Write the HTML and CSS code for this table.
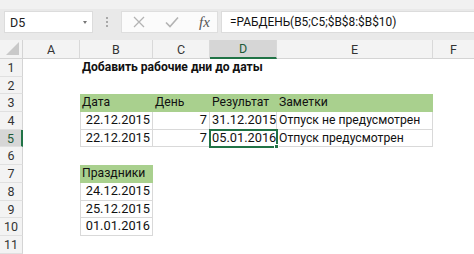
FILE: index.html
```html
<!DOCTYPE html>
<html lang="ru">
<head>
<meta charset="utf-8">
<link rel="stylesheet" href="styles.css">
</head>
<body>
<div class="app">
  <div class="fbar">
    <div class="namebox"><span>D5</span><span class="caret"></span></div>
    <div class="grip"><i></i><i></i><i></i></div>
    <div class="btns">
      <svg class="ic" width="14" height="14" viewBox="0 0 14 14"><path d="M2 2 L12 12 M12 2 L2 12" stroke="#b3b3b3" stroke-width="1.3" fill="none"/></svg>
      <svg class="ic" width="16" height="14" viewBox="0 0 16 14"><path d="M2 7.5 L6 11.5 L14 2.5" stroke="#b3b3b3" stroke-width="1.6" fill="none"/></svg>
      <span class="fx">fx</span>
    </div>
    <div class="formula">=РАБДЕНЬ(B5;C5;$B$8:$B$10)</div>
  </div>
  <div class="sheet">
    <div class="corner"><span></span></div>
    <div class="ch">A</div><div class="ch">B</div><div class="ch">C</div><div class="ch sel">D</div><div class="ch">E</div><div class="ch last">F</div>

    <div class="rh">1</div><div></div><div class="title">Добавить рабочие дни до даты</div><div></div><div></div><div></div><div></div>
    <div class="rh">2</div><div></div><div></div><div></div><div></div><div></div><div></div>
    <div class="rh">3</div><div></div><div class="th">Дата</div><div class="th">День</div><div class="th">Результат</div><div class="th">Заметки</div><div></div>
    <div class="rh">4</div><div></div><div class="td r">22.12.2015</div><div class="td r">7</div><div class="td r">31.12.2015</div><div class="td">Отпуск не предусмотрен</div><div></div>
    <div class="rh sel">5</div><div></div><div class="td r">22.12.2015</div><div class="td r">7</div><div class="td r active">05.01.2016<span class="handle"></span></div><div class="td">Отпуск предусмотрен</div><div></div>
    <div class="rh">6</div><div></div><div></div><div></div><div></div><div></div><div></div>
    <div class="rh">7</div><div></div><div class="th">Праздники</div><div></div><div></div><div></div><div></div>
    <div class="rh">8</div><div></div><div class="td r">24.12.2015</div><div></div><div></div><div></div><div></div>
    <div class="rh">9</div><div></div><div class="td r">25.12.2015</div><div></div><div></div><div></div><div></div>
    <div class="rh">10</div><div></div><div class="td r">01.01.2016</div><div></div><div></div><div></div><div></div>
    <div class="rh">11</div><div></div><div></div><div></div><div></div><div></div><div></div>
  </div>
</div>
</body>
</html>
```
FILE: styles.css
```css
* { box-sizing: border-box; }
html, body { margin: 0; padding: 0; background: #fff; }
body { width: 474px; height: 254px; overflow: hidden; font-family: Roboto, "Noto Sans", sans-serif; color: #111; }

.app { display: flex; flex-direction: column; }

/* formula bar */
.fbar {
  height: 40px;
  background: #e9e9e9;
  border-top: 9px solid #f1f1f1;
  display: flex;
  align-items: flex-start;
  padding: 2px 0 0 4px;
}
.namebox {
  width: 89px; height: 22px;
  background: #fff;
  border: 1px solid #dcdcdc;
  display: flex; align-items: center; justify-content: space-between;
  padding: 0 5px 0 5px;
  font-size: 12.5px; color: #222;
}
.caret { width: 0; height: 0; border-left: 2.5px solid transparent; border-right: 2.5px solid transparent; border-top: 3px solid #777; }
.grip { width: 28px; height: 22px; display: flex; flex-direction: column; align-items: center; justify-content: center; gap: 2px; }
.grip i { display: block; width: 2px; height: 2px; background: #a8a8a8; }
.btns {
  width: 97px; height: 22px;
  background: #fbfbfb;
  border: 1px solid #dedede;
  display: flex; align-items: center;
  padding: 0 0 0 10px;
  gap: 18px;
}
.fx { font-family: "Liberation Serif", serif; font-style: italic; font-size: 15px; color: #555; margin-left: 1px; }
.formula {
  flex: 1; height: 22px;
  margin-left: 3px;
  background: #fff;
  border: 1px solid #dcdcdc;
  border-right: none;
  padding: 0 0 0 8px;
  font-size: 11.9px; line-height: 20px; color: #111;
  white-space: nowrap;
}

/* worksheet */
.sheet {
  display: grid;
  grid-template-columns: 23px 57px 73px 57px 67px 156px 41px;
  grid-template-rows: 19px repeat(11, 17.7px);
  font-size: 12.2px;
}
.sheet > div { min-width: 0; white-space: nowrap; }
.corner { background: #f3f3f3; border-right: 1px solid #d4d4d4; border-bottom: 1px solid #d4d4d4; position: relative; }
.corner span { position: absolute; right: 3px; bottom: 3px; width: 0; height: 0; border-left: 13px solid transparent; border-bottom: 13px solid #c9c9c9; }
.ch {
  background: #f3f3f3;
  border-right: 1px solid #d9d9d9;
  border-bottom: 1px solid #d4d4d4;
  text-align: center; line-height: 19px; color: #333; font-size: 12.5px;
}
.ch.last { border-right: none; }
.ch.sel { background: #d6d6d6; border-bottom: 2px solid #217346; color: #1f5a37; line-height: 18px; }
.rh {
  background: #f3f3f3;
  border-right: 1px solid #d4d4d4;
  border-bottom: 1px solid #e0e0e0;
  text-align: center; line-height: 17px; color: #333; font-size: 12.5px;
}
.rh.sel { background: #d6d6d6; border-right: 2px solid #217346; color: #1f5a37; }

.title { font-weight: bold; line-height: 17.7px; padding-left: 2px; overflow: visible; font-size: 12.1px; }
.th {
  background: #a9d08e;
  padding-left: 2px;
  line-height: 17.7px;
}
.td {
  border-right: 1px solid #d9d9d9;
  border-bottom: 1px solid #d9d9d9;
  padding: 0 2px;
  line-height: 16.7px;
  position: relative;
}
.td:nth-child(7n+3) { border-left: 1px solid #d9d9d9; }
.td.r { text-align: right; font-size: 12.8px; }
.td.active { outline: 2px solid #217346; outline-offset: -1px; z-index: 1; }
.handle { position: absolute; right: -3px; bottom: -3px; width: 5px; height: 5px; background: #217346; border: 1px solid #fff; }
```
